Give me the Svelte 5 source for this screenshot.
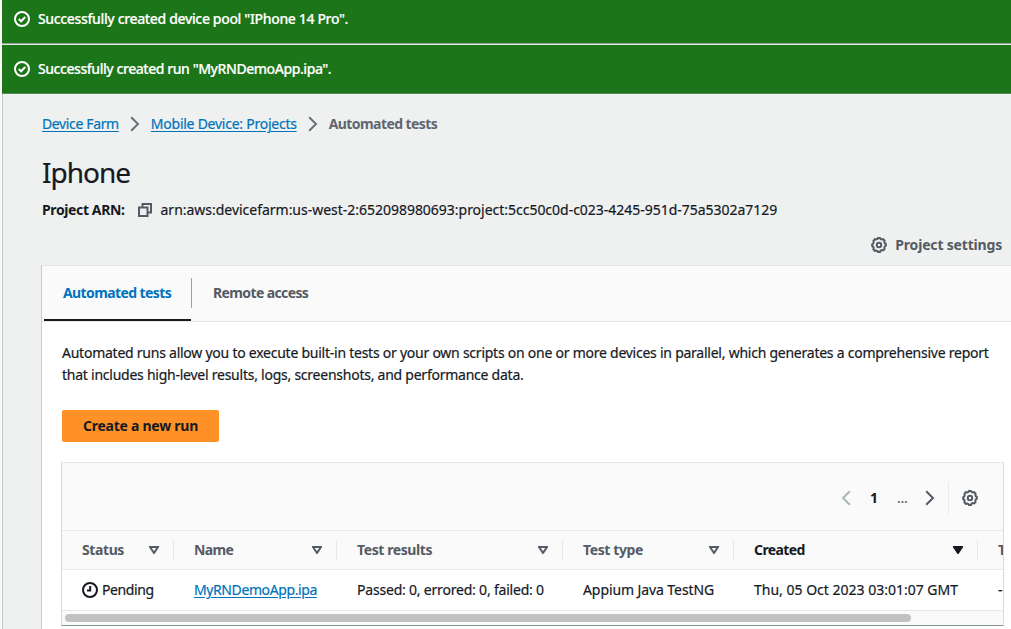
<script>
  const messages = [
    { text: 'Successfully created device pool "IPhone 14 Pro".', kind: 'pool' },
    { text: 'Successfully created run "MyRNDemoApp.ipa".', kind: 'run' }
  ];
  const columns = [
    { label: 'Status', key: 'status' },
    { label: 'Name', key: 'name' },
    { label: 'Test results', key: 'results' },
    { label: 'Test type', key: 'type' },
    { label: 'Created', key: 'created', sorted: true }
  ];
</script>

{#snippet check()}
  <svg class="icon" viewBox="0 0 16 16" width="16" height="16"><circle cx="8" cy="8" r="7" /><path d="M4.800 8l2.300 2.300L11.300 6" /></svg>
{/snippet}
{#snippet gear()}
  <svg class="icon gear" viewBox="0 0 16 16" width="16" height="16"><path d="M6.400 2 7 1h2l.6 1 1.300.5 1.300-.3 1.400 1.400-.3 1.300.5 1.300 1 .6v2l-1 .6-.5 1.300.3 1.300-1.400 1.400-1.300-.3-1.300.5L9 15H7l-.6-1-1.300-.5-1.300.3L2.400 12.400l.3-1.300-.5-1.300-1-.6v-2l1-.6.5-1.300-.3-1.300L3.800 2.200l1.300.3z" /><circle cx="8" cy="8" r="2.200" /></svg>
{/snippet}
{#snippet chevron()}
  <svg class="chevron" viewBox="0 0 10 16" width="10" height="16"><path d="M1.2 1.2 8 8l-6.8 6.8" /></svg>
{/snippet}

<div class="page">
  <div class="flashes">
    {#each messages as m}
      <div class="flash {m.kind}">{@render check()}<span>{m.text}</span></div>
    {/each}
  </div>
  <main>
    <nav class="crumbs">
      <a class="farm" href="#farm">Device Farm</a>{@render chevron()}<a class="projects" href="#projects">Mobile Device: Projects</a>{@render chevron()}<b>Automated tests</b>
    </nav>
    <h1>Iphone</h1>
    <div class="arn">
      <b>Project ARN:</b>
      <svg class="copy" viewBox="0 0 14 14" width="14" height="14"><path d="M1 4.5h8.5V13H1zM4.5 4V1H13v8.500H10" /></svg>
      <span>arn:aws:devicefarm:us-west-2:652098980693:project:5cc50c0d-c023-4245-951d-75a5302a7129</span>
    </div>
    <div class="settings">{@render gear()}<b>Project settings</b></div>
    <section class="panel">
      <div class="tabs">
        <div class="tab active"><span>Automated tests</span></div>
        <div class="tab"><span>Remote access</span></div>
      </div>
      <div class="content">
        <p><span class="line1">Automated runs allow you to execute built-in tests or your own scripts on one or more devices in parallel, which generates a comprehensive report</span><br /><span class="line2">that includes high-level results, logs, screenshots, and performance data.</span></p>
        <button><span>Create a new run</span></button>
        <div class="table">
          <div class="toolbar">
            <span class="prev">{@render chevron()}</span>
            <b>1</b><span class="dots">...</span>
            {@render chevron()}
            <div class="prefs">{@render gear()}</div>
          </div>
          <div class="row head">
            {#each columns as c}
              <div class="cell {c.key}" class:sorted={c.sorted}>
                <span>{c.label}</span>
                <svg class="sort" viewBox="0 0 10 8" width="10" height="8"><path d="M1 1h8L5 7z" /></svg>
              </div>
            {/each}
            <div class="cell last"><span>Total minutes</span></div>
          </div>
          <div class="row body">
            <div class="cell status"><svg class="icon" viewBox="0 0 16 16" width="16" height="16"><circle cx="8" cy="8" r="7" /><path d="M8.200 4v4.500H5" /></svg><span>Pending</span></div>
            <div class="cell name"><a href="#run">MyRNDemoApp.ipa</a></div>
            <div class="cell results"><span>Passed: 0, errored: 0, failed: 0</span></div>
            <div class="cell type"><span>Appium Java TestNG</span></div>
            <div class="cell created"><span>Thu, 05 Oct 2023 03:01:07 GMT</span></div>
            <div class="cell last"><span>-</span></div>
          </div>
          <div class="scroll"><div class="thumb"></div></div>
        </div>
      </div>
    </section>
  </main>
</div>

<style>
  :global(body) { background: #fff; overflow: hidden; }
  .page { box-sizing: border-box; width: 1011px; height: 629px; overflow: hidden; padding-left: 2px; background: #fafafa; font: 14px/22px "Noto Sans", sans-serif; color: #16191f; -webkit-text-stroke: 0.2px currentColor; }
  * { box-sizing: border-box; }
  span, a, b, h1 { white-space: nowrap; }
  b { font-weight: 700; }
  b, .tab, .head, button { -webkit-text-stroke: 0; }
  svg { display: block; flex: none; fill: none; stroke: currentColor; stroke-width: 2; }
  a { color: #0073bb; text-decoration: underline; text-underline-offset: 2px; }
  .flash { display: flex; align-items: center; gap: 8px; padding-left: 12px; background: #1d7519; color: #fff; font-weight: 500; }
  .flash.pool { height: 45px; padding-bottom: 7px; border-bottom: 1px solid #e4e8e4; box-shadow: inset 0 -1px #8aa58a; letter-spacing: -0.35px; }
  .flash.run { height: 49px; border-bottom: 1px solid #548a51; letter-spacing: -0.44px; }
  main { height: 535px; padding-left: 39px; background: #eff1f1; border-left: 1px solid #c0c9c9; }
  .crumbs { display: flex; align-items: center; height: 60px; color: #545b64; }
  .crumbs .chevron { margin: 0 11px; color: #687078; }
  .crumbs b { color: #5f666e; letter-spacing: -0.57px; }
  .farm { letter-spacing: -0.36px; }
  .projects { letter-spacing: -0.25px; }
  h1 { margin: 0; font-size: 28px; line-height: 36px; font-weight: 400; letter-spacing: -1px; }
  .arn { display: flex; align-items: center; height: 36px; padding-top: 4px; }
  .arn b { letter-spacing: -0.38px; }
  .arn span { letter-spacing: -0.02px; }
  .copy { margin: 0 9px 0 13px; color: #545b64; }
  .settings { display: flex; align-items: center; justify-content: flex-end; gap: 8px; height: 38px; padding-right: 9px; color: #545b64; }
  .settings b { letter-spacing: -0.18px; }
  .panel { margin-left: -1px; margin-top: 1px; height: 380px; border-left: 1px solid #c5cccc; border-top: 1px solid #e3e5e5; background: #fff; }
  .tabs { display: flex; height: 56px; background: #fafafa; border-bottom: 1px solid #e6e8e8; padding-left: 2px; }
  .tab { position: relative; display: flex; align-items: center; height: 55px; padding: 0 22px 1px; font-weight: 700; color: #545b64; letter-spacing: -0.62px; }
  .tab.active { width: 147px; padding: 1px 0 0 19px; color: #0073bb; border-bottom: 2px solid #16191f; letter-spacing: -0.6px; }
  .tab.active::after { content: ""; position: absolute; right: -1px; top: 12px; height: 30px; width: 1px; background: #95a5a6; }
  .content { padding: 20px 0 0 20px; }
  p { margin: 0; letter-spacing: -0.245px; }
  button { display: block; width: 157px; height: 32px; margin: 24px 0 20px; padding: 0; border: 0; border-radius: 2px; background: #ff9127; color: #16191f; font: 700 14px/22px "Noto Sans", sans-serif; letter-spacing: -0.25px; }
  .table { width: 943px; height: 164px; margin-left: -1px; border: 1px solid #d5dbdb; border-top-color: #e4e7e7; border-bottom-color: #879596; overflow: hidden; }
  .toolbar { display: flex; align-items: center; justify-content: flex-end; height: 67px; padding: 3px 25px 0 0; background: #fafafa; color: #545b64; }
  .prev { color: #aab7b8; transform: scaleX(-1); }
  .toolbar b { width: 8px; margin-left: 19px; color: #16191f; }
  .dots { width: 11px; margin: 0 17px 0 19px; letter-spacing: -0.2px; }
  .prefs { display: flex; align-items: center; height: 32px; margin-left: 13px; padding-left: 13px; border-left: 1px solid #eaeded; }
  .row { display: grid; grid-template-columns: 112px 163px 226px 171px 244px 120px; border-top: 1px solid #e6e9e9; }
  .row.body { height: 42px; border-bottom: 1px solid #e6e9e9; }
  .cell { position: relative; display: flex; align-items: center; padding-left: 20px; }
  .head { background: #fafafa; color: #545b64; font-weight: 700; height: 39px; letter-spacing: -0.4px; }
  .head .name, .head .created { letter-spacing: -0.6px; }
  .head .cell { justify-content: space-between; padding-right: 15px; }
  .head .cell:not(.last)::after { content: ""; position: absolute; right: 0; top: 9px; width: 1px; height: 20px; background: #e6e9e9; }
  .sorted { color: #16191f; }
  .sorted .sort { fill: currentColor; }
  .body .status { gap: 4px; letter-spacing: -0.4px; }
  .body .name { letter-spacing: -0.4px; }
  .body .results { letter-spacing: -0.2px; }
  .body .type { letter-spacing: -0.09px; }
  .scroll { height: 15px; padding: 3px; background: #fafafa; }
  .thumb { width: 846px; height: 8px; border-radius: 4px; background: #c1c1c1; }
</style>
